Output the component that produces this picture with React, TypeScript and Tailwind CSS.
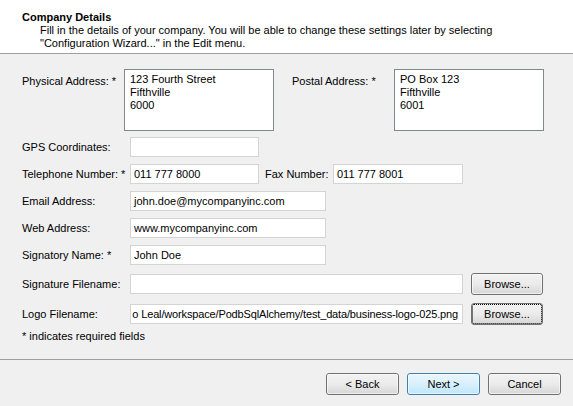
import React from "react";

const font = "font-['Liberation_Sans',Arial,sans-serif]";

function TextBox({ value, className }: { value?: string; className: string }) {
  return (
    <div
      className={`h-[20px] border border-[#d4d4d4] bg-white px-[3px] text-[11px] leading-[18px] text-black whitespace-nowrap overflow-hidden ${className}`}
    >
      {value}
    </div>
  );
}

function AddressBox({ lines }: { lines: string[] }) {
  return (
    <div className="h-[62px] w-[150px] border border-[#828790] bg-white px-[5px] pt-[3px] text-[11px] leading-[13px]">
      {lines.map((l) => (
        <div key={l}>{l}</div>
      ))}
    </div>
  );
}

function WinButton({
  children,
  primary,
  focused,
  className = "",
}: {
  children: React.ReactNode;
  primary?: boolean;
  focused?: boolean;
  className?: string;
}) {
  return (
    <div
      className={`flex items-center justify-center rounded-[3px] border text-[11px] text-black ${
        primary
          ? "border-[#3c7fb1] bg-gradient-to-b from-[#eaf6fd] via-[#d9f0fc] to-[#bee6fd]"
          : "border-[#707070] bg-gradient-to-b from-[#f2f2f2] via-[#ebebeb] to-[#d6d6d6]"
      } ${className}`}
    >
      <div
        className={`flex h-full w-full items-center justify-center rounded-[2px] ${
          focused ? "border border-dotted border-black" : "border border-white/60"
        }`}
      >
        {children}
      </div>
    </div>
  );
}

function Row({
  label,
  labelW,
  mt,
  children,
}: {
  label: string;
  labelW: string;
  mt: string;
  children?: React.ReactNode;
}) {
  return (
    <div className={`flex items-center ${mt}`}>
      <div className={`${labelW} shrink-0 text-[11px]`}>{label}</div>
      {children}
    </div>
  );
}

export default function App() {
  return (
    <div className={`h-[406px] w-[573px] overflow-hidden bg-[#f0f0f0] text-black ${font}`}>
      <div className="h-[54px] border-b border-[#a0a0a0] bg-white pl-[22px] pt-[10px]">
        <div className="text-[11px] font-bold leading-[14px]">Company Details</div>
        <div className="pl-[18px] text-[11px] leading-[13px]">
          Fill in the details of your company. You will be able to change these settings later by selecting
          <br />
          "Configuration Wizard..." in the Edit menu.
        </div>
      </div>

      <div className="h-[305px] px-[22px] pt-[15px]">
        <div className="flex">
          <div className="w-[102px] shrink-0 pt-[4px] text-[11px]">Physical Address: *</div>
          <AddressBox lines={["123 Fourth Street", "Fifthville", "6000"]} />
          <div className="ml-[18px] w-[102px] shrink-0 pt-[4px] text-[11px]">Postal Address: *</div>
          <AddressBox lines={["PO Box 123", "Fifthville", "6001"]} />
        </div>

        <Row label="GPS Coordinates:" labelW="w-[108px]" mt="mt-[6px]">
          <TextBox className="w-[129px]" />
        </Row>

        <Row label="Telephone Number: *" labelW="w-[108px]" mt="mt-[7px]">
          <TextBox className="w-[129px]" value="011 777 8000" />
          <div className="ml-[6px] w-[68px] shrink-0 text-[11px]">Fax Number:</div>
          <TextBox className="w-[130px]" value="011 777 8001" />
        </Row>

        <Row label="Email Address:" labelW="w-[108px]" mt="mt-[7px]">
          <TextBox className="w-[196px]" value="john.doe@mycompanyinc.com" />
        </Row>

        <Row label="Web Address:" labelW="w-[108px]" mt="mt-[7px]">
          <TextBox className="w-[196px]" value="www.mycompanyinc.com" />
        </Row>

        <Row label="Signatory Name: *" labelW="w-[108px]" mt="mt-[7px]">
          <TextBox className="w-[196px]" value="John Doe" />
        </Row>

        <Row label="Signature Filename:" labelW="w-[108px]" mt="mt-[8px]">
          <TextBox className="w-[333px]" />
          <WinButton className="ml-[8px] h-[22px] w-[72px]">Browse...</WinButton>
        </Row>

        <Row label="Logo Filename:" labelW="w-[108px]" mt="mt-[8px]">
          <div className="flex h-[20px] w-[333px] justify-end overflow-hidden border border-[#d4d4d4] bg-white pr-[4px] text-[11px] leading-[18px] tracking-[-0.15px] whitespace-nowrap">
            <span>o Leal/workspace/PodbSqlAlchemy/test_data/business-logo-025.png</span>
          </div>
          <WinButton focused className="ml-[8px] h-[22px] w-[72px]">
            Browse...
          </WinButton>
        </Row>

        <div className="mt-[3px] text-[11px]">* indicates required fields</div>
      </div>

      <div className="border-t border-[#a0a0a0]">
        <div className="flex justify-end gap-[8px] pr-[12px] pt-[13px]">
          <WinButton className="h-[22px] w-[73px]">&lt; Back</WinButton>
          <WinButton primary className="h-[22px] w-[73px]">
            Next &gt;
          </WinButton>
          <WinButton className="h-[22px] w-[73px]">Cancel</WinButton>
        </div>
      </div>
    </div>
  );
}
